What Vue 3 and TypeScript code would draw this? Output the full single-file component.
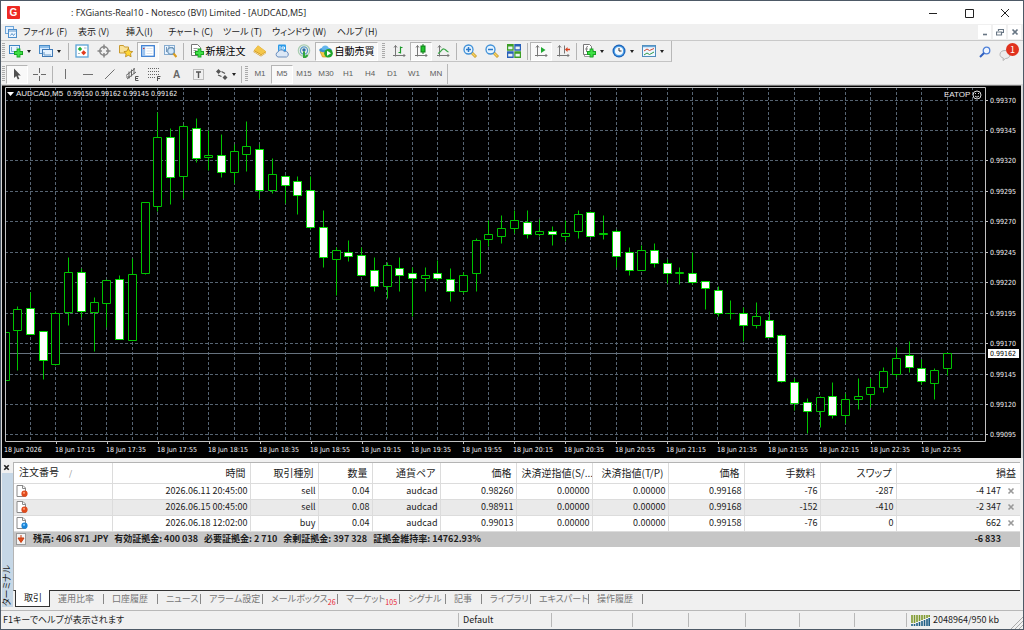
<script setup lang="ts">
type Candle = [high: number, top: number, bottom: number, low: number, falling: 0 | 1]
interface Tool { icon: string; label: string; kind?: 'drop' | 'sep' | 'grip' | 'wide'; pressed?: boolean; text?: string }

const menus = ['ファイル (F)', '表示 (V)', '挿入(I)', 'チャート (C)', 'ツール (T)', 'ウィンドウ (W)', 'ヘルプ (H)']

const sep: Tool = { icon: '', label: '', kind: 'sep' }
const grip: Tool = { icon: '', label: '', kind: 'grip' }

const mainTools: Tool[] = [
  grip,
  { icon: 'newchart', label: '新規チャート', kind: 'drop' },
  { icon: 'profiles', label: 'チャートの組表示', kind: 'drop' },
  sep,
  { icon: 'market', label: '気配値表示' },
  { icon: 'datawin', label: 'データウィンドウ' },
  { icon: 'navigator', label: 'ナビゲーター' },
  { icon: 'terminal', label: 'ターミナル', pressed: true },
  { icon: 'tester', label: 'ストラテジーテスター' },
  sep,
  { icon: 'order', label: '新規注文', kind: 'wide', text: '新規注文' },
  { icon: 'gold', label: 'メタエディター' },
  { icon: 'cloud', label: 'コミュニティ' },
  { icon: 'signal', label: 'シグナル' },
  { icon: 'auto', label: '自動売買', kind: 'wide', text: '自動売買', pressed: true },
  grip,
  { icon: 'bars', label: 'バーチャート' },
  { icon: 'candles', label: 'ローソク足', pressed: true },
  { icon: 'line', label: 'ラインチャート' },
  sep,
  { icon: 'zoomin', label: '拡大' },
  { icon: 'zoomout', label: '縮小' },
  { icon: 'tile', label: '整列' },
  sep,
  { icon: 'scroll', label: '自動スクロール', pressed: true },
  { icon: 'shift', label: 'チャートシフト' },
  sep,
  { icon: 'indicator', label: 'インディケータ', kind: 'drop' },
  { icon: 'clock', label: '時間足設定', kind: 'drop' },
  { icon: 'template', label: '定型チャート', kind: 'drop' },
]

const lineTools: Tool[] = [
  grip,
  { icon: 'cursor', label: 'カーソル', pressed: true },
  { icon: 'cross', label: 'クロスヘアカーソル' },
  sep,
  { icon: 'vline', label: '垂直線' },
  { icon: 'hline', label: '水平線' },
  { icon: 'trend', label: 'トレンドライン' },
  { icon: 'channel', label: '等距離チャネル' },
  { icon: 'fibo', label: 'フィボナッチ' },
  { icon: 'texta', label: 'テキスト' },
  { icon: 'labelt', label: 'テキストラベル' },
  { icon: 'arrows', label: '矢印', kind: 'drop' },
  sep,
  grip,
]
const frames = ['M1', 'M5', 'M15', 'M30', 'H1', 'H4', 'D1', 'W1', 'MN']

// Vertical values are in thirds of a chart unit, measured from the top of the chart.
const candles: Candle[] = [
  [717, 744, 889, 889, 0], [667, 676, 738, 860, 0], [626, 674, 752, 752, 1], [742, 743, 830, 885, 1],
  [683, 688, 840, 843, 0], [519, 565, 686, 725, 0], [553, 565, 683, 700, 1], [640, 655, 686, 802, 0],
  [585, 589, 659, 729, 0], [574, 586, 767, 767, 1], [524, 571, 769, 769, 0], [354, 355, 569, 571, 0],
  [84, 160, 368, 382, 0], [132, 160, 279, 362, 1], [121, 127, 277, 342, 0], [103, 132, 224, 236, 1],
  [140, 213, 221, 258, 0], [151, 213, 265, 279, 1], [180, 202, 265, 299, 0], [111, 187, 210, 263, 0],
  [180, 195, 318, 342, 1], [223, 271, 320, 328, 0], [273, 277, 305, 358, 1], [278, 292, 334, 390, 1],
  [278, 319, 430, 437, 1], [380, 430, 520, 551, 1], [491, 498, 525, 635, 0], [468, 505, 518, 532, 1],
  [491, 513, 573, 573, 1], [519, 560, 608, 623, 1], [535, 545, 608, 644, 0], [519, 553, 573, 621, 1],
  [549, 568, 583, 698, 1], [549, 574, 583, 623, 0], [530, 568, 583, 590, 1], [552, 586, 623, 653, 1],
  [565, 574, 621, 629, 0], [463, 469, 569, 621, 0], [410, 451, 466, 488, 0], [395, 433, 456, 478, 0],
  [380, 409, 434, 448, 0], [380, 415, 451, 463, 1], [407, 441, 451, 458, 0], [426, 441, 451, 485, 1],
  [409, 448, 456, 471, 0], [378, 392, 443, 463, 0], [383, 386, 456, 458, 1], [395, 449, 450, 466, 0],
  [436, 441, 518, 551, 1], [489, 505, 559, 575, 1], [485, 498, 559, 559, 0], [478, 498, 539, 551, 1],
  [527, 538, 569, 599, 1], [549, 566, 567, 602, 0], [505, 568, 596, 600, 1], [591, 593, 613, 676, 1],
  [606, 619, 689, 698, 1], [648, 688, 689, 707, 0], [669, 688, 724, 772, 1], [654, 696, 725, 733, 0],
  [682, 710, 759, 761, 1], [751, 753, 892, 896, 1], [882, 896, 957, 978, 1], [942, 955, 981, 1048, 1],
  [936, 940, 981, 1031, 0], [895, 937, 993, 1004, 1], [927, 946, 993, 1017, 0], [884, 937, 946, 975, 0],
  [883, 910, 932, 970, 0], [849, 862, 910, 924, 0], [791, 822, 872, 880, 0], [771, 813, 851, 864, 1],
  [827, 853, 893, 902, 1], [852, 859, 898, 946, 0], [807, 808, 854, 873, 0],
]
const snap = (v: number): number => Math.floor(v) + 0.5
const bars = candles.map(([high, top, bottom, low, falling], i) => {
  const x = snap(4 + i * 12.735)
  return {
    x,
    wick: `M${x} ${snap(high / 3)}V${snap(low / 3)}`,
    body: `M${x - 4} ${snap(top / 3)}H${x + 4}V${snap(bottom / 3)}H${x - 4}Z`,
    falling: falling === 1,
  }
})

const prices = Array.from({ length: 12 }, (_, i) => ({
  y: snap(16 + i * 30.45),
  text: (0.9937 - i * 0.00025).toFixed(5),
}))
const columns = Array.from({ length: 38 }, (_, i) => snap(29.5 + i * 25.46))
const times = Array.from({ length: 19 }, (_, i) => {
  const minutes = 16 * 60 + 55 + i * 20
  const clock = `${Math.floor(minutes / 60)}:${String(minutes % 60).padStart(2, '0')}`
  return { x: Math.round(3 + i * 50.93), text: i === 0 ? '18 Jun 2026' : `18 Jun ${clock}` }
})

const heads = ['注文番号', '時間', '取引種別', '数量', '通貨ペア', '価格', '決済逆指値(S/...', '決済指値(T/P)', '価格', '手数料', 'スワップ', '損益']
const orders = [
  { side: 'sell', cells: ['2026.06.11 20:45:00', 'sell', '0.04', 'audcad', '0.98260', '0.00000', '0.00000', '0.99168', '-76', '-287'], profit: '-4 147' },
  { side: 'sell', cells: ['2026.06.15 00:45:00', 'sell', '0.08', 'audcad', '0.98911', '0.00000', '0.00000', '0.99168', '-152', '-410'], profit: '-2 347' },
  { side: 'buy', cells: ['2026.06.18 12:02:00', 'buy', '0.04', 'audcad', '0.99013', '0.00000', '0.00000', '0.99158', '-76', '0'], profit: '662' },
]
const summary = ['残高: 406 871 JPY', '有効証拠金: 400 038', '必要証拠金: 2 710', '余剰証拠金: 397 328', '証拠金維持率: 14762.93%']

const tabs: { text: string; count?: number }[] = [
  { text: '取引' }, { text: '運用比率' }, { text: '口座履歴' }, { text: 'ニュース' }, { text: 'アラーム設定' },
  { text: 'メールボックス', count: 26 }, { text: 'マーケット', count: 105 }, { text: 'シグナル' }, { text: '記事' },
  { text: 'ライブラリ' }, { text: 'エキスパート' }, { text: '操作履歴' },
]
</script>

<template>
  <div class="window">
    <svg class="symbols" aria-hidden="true">
      <defs>
        <symbol id="newchart" viewBox="0 0 14 14">
          <rect x="0.5" y="1.5" width="10" height="8" fill="#e8f4ff" stroke="#3f86c4" />
          <path d="M2.500 3v4.500H5M8 3v1" fill="none" stroke="#7fb0d8" />
          <path d="M9.500 4.500v9M5 9h9" stroke="#17a321" stroke-width="3.800" />
          <path d="M9.500 5.500v7M6 9h7" stroke="#3fe046" stroke-width="2.200" />
        </symbol>
        <symbol id="profiles" viewBox="0 0 14 14">
          <rect x="0.5" y="1.5" width="10" height="8" fill="#d5eaff" stroke="#4a8cc8" />
          <path d="M1 3h9" stroke="#74b0e4" stroke-width="1.500" />
          <rect x="3.500" y="5.500" width="10" height="7" fill="#e6f3ff" stroke="#3f78b4" />
          <path d="M5 8v3h7" fill="none" stroke="#6d9cc8" />
        </symbol>
        <symbol id="market" viewBox="0 0 14 14">
          <rect x="1" y="1" width="12" height="12" fill="#fff" stroke="#5ba3d8" stroke-width="1.300" />
          <path d="M5 2.800 7.200 5 5 7.200 2.800 5z" fill="#20b030" />
          <path d="M8.700 6.300 11.200 8.800 8.700 11.300 6.200 8.800z" fill="#e23b1d" />
          <path d="M3 9.500h2M9 4h2.500" stroke="#a9b7c2" />
        </symbol>
        <symbol id="datawin" viewBox="0 0 14 14">
          <circle cx="7" cy="7" r="4.200" fill="none" stroke="#858585" stroke-width="1.500" />
          <path d="M7 0.500v4.500M7 9v4.500M0.500 7H5M9 7h4.500" stroke="#858585" stroke-width="1.500" />
        </symbol>
        <symbol id="navigator" viewBox="0 0 14 14">
          <path d="M0.500 1.500h4l1 1.500h4V9h-9z" fill="#f9e29a" stroke="#c99b2f" />
          <path d="m9.300 4.300 1.400 2.900 3 .4-2.200 2.100.6 3.100-2.800-1.500-2.800 1.500.6-3.100L4.900 7.600l3-.4z" fill="#ffd633" stroke="#b88614" stroke-width=".8" />
        </symbol>
        <symbol id="terminal" viewBox="0 0 14 14">
          <rect x="0.700" y="1.700" width="12.600" height="10.600" fill="#fff" stroke="#3b7ed2" stroke-width="1.300" />
          <path d="M1.300 2.300h2.900v9.400H1.300z" fill="#9cc4f0" />
          <path d="M5.500 4.500h6M5.500 7h6M5.500 9.500h6" stroke="#dbe4ee" />
          <path d="M2 4.500h1.500" stroke="#c33" />
        </symbol>
        <symbol id="tester" viewBox="0 0 14 14">
          <rect x="1.500" y="1.500" width="10" height="9" fill="#e8f3ff" stroke="#86acd0" />
          <path d="M3.500 3v5M6 2v4M9.500 3v3" stroke="#7799bb" />
          <circle cx="8" cy="7" r="3.300" fill="#cfe6fb" stroke="#6d94b5" stroke-width="1.200" />
          <path d="m10.500 9.500 3 3.500" stroke="#d99c1f" stroke-width="2.200" />
        </symbol>
        <symbol id="order" viewBox="0 0 14 14">
          <path d="M1.500 0.500h6l3 3v8h-9z" fill="#fff" stroke="#777" />
          <path d="M3.500 4.500h4M3.500 6.500h3M3.500 8.500h2" stroke="#999" />
          <path d="M9.500 4.500v9M5 9h9" stroke="#17a321" stroke-width="3.800" />
          <path d="M9.500 5.500v7M6 9h7" stroke="#3fe046" stroke-width="2.200" />
        </symbol>
        <symbol id="gold" viewBox="0 0 14 14">
          <path d="m5 1.500 8 6-.5 2-4.500 3L.5 8l.5-1.500z" fill="#c88a10" />
          <path d="m5 1.500 8 6-4.700 3L1 6.200z" fill="#f3c64b" />
          <path d="M1 7.500 8.200 11.500l4.300-2.700" stroke="#fff0b8" fill="none" stroke-width=".8" />
        </symbol>
        <symbol id="cloud" viewBox="0 0 14 14">
          <rect x="3" y="0.500" width="8" height="7.500" rx="1" fill="#2b9ae8" />
          <path d="M5 2v4M7 3h2.500v2H7z" stroke="#fff" fill="none" stroke-width=".9" />
          <path d="M3 13a2.600 2.600 0 0 1 0-5 3.500 3.500 0 0 1 6.200-.5A2.800 2.800 0 0 1 11.500 13z" fill="#dce8f6" stroke="#6d8fbd" />
        </symbol>
        <symbol id="signal" viewBox="0 0 14 14">
          <circle cx="7" cy="6.500" r="5.700" fill="none" stroke="#a8cdb0" stroke-width="1.200" />
          <circle cx="7" cy="6.500" r="3.600" fill="none" stroke="#5d9fc5" stroke-width="1.300" />
          <circle cx="7" cy="6" r="1.700" fill="#2d6ea5" />
          <path d="M7 7.500V13.500q2.500-.5 3.500-2.500" stroke="#32a63b" stroke-width="2" fill="none" />
        </symbol>
        <symbol id="auto" viewBox="0 0 14 14">
          <path d="M1 7.500h10L9 13H3.500z" fill="#f3c748" stroke="#c08a18" stroke-width=".6" />
          <ellipse cx="6.500" cy="6" rx="6.300" ry="2.300" fill="#3c8fd0" />
          <path d="M2.500 5.500C2.500 0 10 0 10 5.500q-4 1.500-7.500 0" fill="#63b5ec" />
          <circle cx="9.500" cy="9.300" r="4.300" fill="#20a52c" />
          <path d="m8 6.800 4 2.500-4 2.500z" fill="#fff" />
        </symbol>
        <symbol id="bars" viewBox="0 0 14 14">
          <path d="M3.500 1.500v11M1 11.500h12M2 3.500l1.500-2L5 3.500M11.500 10l1.500 1.500-1.500 1.500" stroke="#777" fill="none" />
          <path d="M8.500 2.500v7M8.500 3.500h2M6.500 8.500h2" stroke="#1d9a2a" stroke-width="1.200" />
        </symbol>
        <symbol id="candles" viewBox="0 0 14 14">
          <path d="M3.500 1.500v11M1 11.500h12M2 3.500l1.500-2L5 3.500M11.500 10l1.500 1.500-1.500 1.500" stroke="#777" fill="none" />
          <path d="M9 0v10" stroke="#0b7d14" />
          <rect x="7" y="2" width="4" height="6" fill="#1fc42b" stroke="#0b7d14" />
        </symbol>
        <symbol id="line" viewBox="0 0 14 14">
          <path d="M3.500 1.500v11M1 11.500h12M2 3.500l1.500-2L5 3.500M11.500 10l1.500 1.500-1.500 1.500" stroke="#777" fill="none" />
          <path d="M2 9.500c3-1 3.500-5 6-4.500 2 .4 2.500 2.500 4.500 3" stroke="#3ba848" fill="none" stroke-width="1.200" />
        </symbol>
        <symbol id="zoomin" viewBox="0 0 14 14">
          <path d="m8.500 8.500 4.500 4.500" stroke="#c89420" stroke-width="2.800" />
          <path d="m9 9 3.500 3.500" stroke="#f6d565" stroke-width="1.400" />
          <circle cx="5.500" cy="5.500" r="4.500" fill="#e6f4ff" stroke="#3f90d8" stroke-width="1.300" />
          <path d="M5.500 3v5M3 5.500h5" stroke="#2b78c8" stroke-width="1.500" />
        </symbol>
        <symbol id="zoomout" viewBox="0 0 14 14">
          <path d="m8.500 8.500 4.500 4.500" stroke="#c89420" stroke-width="2.800" />
          <path d="m9 9 3.500 3.500" stroke="#f6d565" stroke-width="1.400" />
          <circle cx="5.500" cy="5.500" r="4.500" fill="#e6f4ff" stroke="#3f90d8" stroke-width="1.300" />
          <path d="M3 5.500h5" stroke="#2b78c8" stroke-width="1.500" />
        </symbol>
        <symbol id="tile" viewBox="0 0 14 14">
          <path d="M0 0h6.700v6.700H0zM7.300 7.300H14V14H7.300z" fill="#3c9e26" />
          <path d="M7.300 0H14v6.700H7.300zM0 7.300h6.700V14H0z" fill="#2860b8" />
          <path d="M1.200 2.500h4.300v2.800H1.200zM8.500 2.500h4.300v2.800H8.500zM1.200 9.800h4.300v2.800H1.200zM8.500 9.800h4.300v2.800H8.500z" fill="#e9f2f4" />
        </symbol>
        <symbol id="scroll" viewBox="0 0 14 14">
          <path d="M3.500 1.500v11M1 11.500h12M2 3.500l1.500-2L5 3.500M11.500 10l1.500 1.500-1.500 1.500" stroke="#777" fill="none" />
          <path d="m7 3 4.500 3L7 9z" fill="#20a832" />
        </symbol>
        <symbol id="shift" viewBox="0 0 14 14">
          <path d="M3.500 1.500v11M1 11.500h12M2 3.500l1.500-2L5 3.500M11.500 10l1.500 1.500-1.500 1.500" stroke="#777" fill="none" />
          <path d="M8.500 1.500v8" stroke="#777" />
          <path d="M9 5.500 11.500 3v1.700H14v1.600h-2.500V8z" fill="#d8401e" />
        </symbol>
        <symbol id="indicator" viewBox="0 0 14 14">
          <path d="M2.500 3.500h6l3 3v6h-9z" fill="#fff" stroke="#999" />
          <path d="M1.500 0.500h6l2 2v8h-8z" fill="#fff" stroke="#777" />
          <path d="M6 2.500Q4.500 2 4.500 4v4M3 5h3" stroke="#888" fill="none" />
          <path d="M9.500 4.500v9M5 9h9" stroke="#17a321" stroke-width="3.800" />
          <path d="M9.500 5.500v7M6 9h7" stroke="#3fe046" stroke-width="2.200" />
        </symbol>
        <symbol id="clock" viewBox="0 0 14 14">
          <circle cx="7" cy="7" r="6.500" fill="#1c62b8" />
          <circle cx="7" cy="7" r="5.300" fill="#4fa3ea" />
          <circle cx="7" cy="7" r="4.100" fill="#f3f9ff" />
          <path d="M7 4v3h2.500" stroke="#333" fill="none" />
        </symbol>
        <symbol id="template" viewBox="0 0 14 14">
          <rect x="0.500" y="1.500" width="13" height="11" fill="#eef7ff" stroke="#4f8cbc" />
          <path d="M1 2.500h12" stroke="#69a6d6" stroke-width="1.400" />
          <path d="m2 7 3-2 2.500 1.500L12 4.500" stroke="#cc4a33" fill="none" />
          <path d="m2 11 3-2 2.500 1.500L12 8" stroke="#2f9948" fill="none" />
        </symbol>
        <symbol id="cursor" viewBox="0 0 14 14">
          <path d="M4 1.500v9.500l2.200-2 1.600 3.500 1.600-.7-1.600-3.400h3z" fill="#505050" />
        </symbol>
        <symbol id="cross" viewBox="0 0 14 14">
          <path d="M7.500 1v5M7.500 9v5M1 7.500h5M9 7.500h5" stroke="#6a6a6a" />
        </symbol>
        <symbol id="vline" viewBox="0 0 14 14"><path d="M6.500 2v10" stroke="#707070" /></symbol>
        <symbol id="hline" viewBox="0 0 14 14"><path d="M2 7.500h10" stroke="#707070" /></symbol>
        <symbol id="trend" viewBox="0 0 14 14"><path d="m2 12 9.500-9.500" stroke="#707070" /></symbol>
        <symbol id="channel" viewBox="0 0 14 14">
          <path d="m1 8.500 9-7M2 12l9-7M4 4.500v7M6.500 2.500v7M9 1v6M1 10h4" stroke="#666" />
          <path d="M13.500 9.500h-3v4h3M10.500 11.500h2.500" stroke="#555" fill="none" />
        </symbol>
        <symbol id="fibo" viewBox="0 0 14 14">
          <path d="M1 1.500h12M1 4.500h12M1 7.500h12M1 10.500h7" stroke="#666" stroke-dasharray="1 1" />
          <path d="M13.500 9.500h-3V14M10.500 11.500h2.500" stroke="#555" fill="none" />
        </symbol>
        <symbol id="texta" viewBox="0 0 14 14">
          <text x="4" y="11" class="glyph">A</text>
        </symbol>
        <symbol id="labelt" viewBox="0 0 14 14">
          <rect x="2.500" y="2.500" width="10" height="10" fill="none" stroke="#888" stroke-dasharray="1 1" />
          <path d="M5 5h5M7.500 5v6" stroke="#555" stroke-width="1.400" />
        </symbol>
        <symbol id="arrows" viewBox="0 0 14 14">
          <path d="m3.500 2 2.500 2.500L3.500 7 1 4.500zM10 8l2.500 2.500L10 13l-2.500-2.500z" fill="#555" />
          <path d="M6.500 4.500 10 6.500M3 8l3.500 1.500" stroke="#555" stroke-width="1.200" />
        </symbol>
        <symbol id="page-sell" viewBox="0 0 12 12">
          <path d="M1 0.500h6L9.500 3v8.500H1z" fill="#fff" stroke="#8a8a8a" />
          <path d="M6.500 0.500v3h3" fill="none" stroke="#8a8a8a" />
          <circle cx="8.500" cy="8.700" r="3.100" fill="#e04a1c" />
          <circle cx="8" cy="7.800" r="1.100" fill="#ff9a70" />
        </symbol>
        <symbol id="page-buy" viewBox="0 0 12 12">
          <path d="M1 0.500h6L9.500 3v8.500H1z" fill="#fff" stroke="#8a8a8a" />
          <path d="M6.500 0.500v3h3" fill="none" stroke="#8a8a8a" />
          <circle cx="8.500" cy="8.700" r="3.100" fill="#1b86d8" />
          <circle cx="8" cy="7.800" r="1.100" fill="#86cbff" />
        </symbol>
      </defs>
    </svg>

    <header class="titlebar">
      <span class="logo">G</span>
      <h1>: FXGiants-Real10 - Notesco (BVI) Limited - [AUDCAD,M5]</h1>
      <div class="window-buttons">
        <button type="button" aria-label="最小化"><svg viewBox="0 0 10 10"><path d="M1 5.500h8" /></svg></button>
        <button type="button" aria-label="最大化"><svg viewBox="0 0 10 10"><path d="M1.500 1.500h8v8h-8z" /></svg></button>
        <button type="button" aria-label="閉じる"><svg viewBox="0 0 10 10"><path d="m1 1 8 8M9 1 1 9" /></svg></button>
      </div>
    </header>

    <nav class="menubar">
      <svg class="doc-icon" viewBox="0 0 12 12" aria-hidden="true">
        <rect x="0.500" y="0.500" width="8" height="7" fill="#e4f1ff" stroke="#6fa5d8" />
        <rect x="3.500" y="3.500" width="8" height="8" fill="#eef6ff" stroke="#4f8fcb" />
        <path d="M4 5h7M5.500 9.500l1.500-2 1.500 2 1.500-2" stroke="#5a95cc" fill="none" />
      </svg>
      <div class="menus"><button v-for="m in menus" :key="m" type="button">{{ m }}</button></div>
      <div class="child-buttons">
        <button type="button" aria-label="チャートを最小化"><svg viewBox="0 0 8 8"><path d="M2 6.500h4" stroke-width="1.600" /></svg></button>
        <button type="button" aria-label="チャートを元に戻す"><svg viewBox="0 0 8 8"><path d="M2.500 3V1.500h5v3H6M0.500 4h5v3h-5zM0.500 4h5" stroke-width="1.200" /></svg></button>
        <button type="button" aria-label="チャートを閉じる"><svg viewBox="0 0 8 8"><path d="m1.500 1.500 5 5M6.500 1.500l-5 5" stroke-width="1.700" /></svg></button>
      </div>
    </nav>

    <div class="toolbar">
      <div class="tools framed">
        <template v-for="(t, i) in mainTools" :key="i">
          <span v-if="t.kind === 'sep'" class="sep"></span>
          <span v-else-if="t.kind === 'grip'" class="grip"></span>
          <button v-else type="button" :aria-label="t.label" class="tool" :class="[t.kind, { pressed: t.pressed }]">
            <svg class="icon" aria-hidden="true"><use :href="'#' + t.icon" /></svg>
            <span v-if="t.text">{{ t.text }}</span>
            <span v-if="t.kind === 'drop'" class="caret"></span>
          </button>
        </template>
      </div>
      <div class="extras">
        <button type="button" aria-label="検索">
          <svg viewBox="0 0 12 12" class="search"><circle cx="7.500" cy="4.500" r="3.300" fill="#eef5ff" stroke="#4f80d8" stroke-width="1.300" /><path d="M5 7 1 11" stroke="#2f5fc0" stroke-width="2" /></svg>
        </button>
        <button type="button" class="chat" aria-label="通知 1件">
          <svg viewBox="0 0 14 12" class="bubble"><path d="M6 1.500c3 0 5 1.500 5 4S9 9.500 6.500 9.500L4 11.500l.3-2.500C2 8.500 1 7 1 5.500c0-2.500 2-4 5-4" fill="#ececec" stroke="#b5b5b5" /></svg>
          <span class="badge">1</span>
        </button>
      </div>
    </div>

    <div class="toolbar second">
      <div class="tools">
        <template v-for="(t, i) in lineTools" :key="i">
          <span v-if="t.kind === 'sep'" class="sep"></span>
          <span v-else-if="t.kind === 'grip'" class="grip"></span>
          <button v-else type="button" :aria-label="t.label" class="tool" :class="[t.kind, { pressed: t.pressed }]">
            <svg class="icon" aria-hidden="true"><use :href="'#' + t.icon" /></svg>
            <span v-if="t.kind === 'drop'" class="caret"></span>
          </button>
        </template>
        <button v-for="f in frames" :key="f" type="button" class="tool frame" :class="{ pressed: f === 'M5' }">{{ f }}</button>
      </div>
    </div>

    <main class="chart">
      <svg viewBox="0 0 1022 374" preserveAspectRatio="xMinYMin meet" role="img" aria-label="AUDCAD,M5">
        <rect x="0" y="0" width="1022" height="374" class="edge" />
        <rect x="1" y="1" width="1019" height="373" class="ink" />
        <path d="M1 1.500H1020" class="bevel" />
        <g class="grid">
          <path v-for="x in columns" :key="'c' + x" :d="`M${x} 3V357`" />
          <path v-for="p in prices" :key="'p' + p.y" :d="`M4 ${p.y}H984`" />
        </g>
        <path d="M4 269.500H984" class="quote" />
        <svg x="4" y="3" width="980" height="354" viewBox="4 3 980 354">
          <g v-for="b in bars" :key="b.x" class="candle" :class="{ falling: b.falling }">
            <path :d="b.wick" />
            <path :d="b.body" class="body" />
          </g>
        </svg>
        <path d="M4.500 3.500H984.500V357.500H4.500Z" class="frame-line" />
        <path v-for="t in times.slice(1)" :key="'t' + t.x" :d="`M${t.x + 1.5} 357v3`" class="frame-line" />
        <path v-for="p in prices" :key="'k' + p.y" :d="`M985 ${p.y}h2`" class="frame-line" />
        <path d="M6 8h7l-3.500 4z" class="white" />
        <text x="15" y="12" class="symbol">AUDCAD,M5</text>
        <text x="66" y="12" class="num">0.99150 0.99162 0.99145 0.99162</text>
        <text x="943" y="13" class="symbol">EATOP</text>
        <g class="face">
          <circle cx="976" cy="11" r="4" />
          <path d="M974 12q2 2.500 4 0M974.500 9v1M977.500 9v1" />
        </g>
        <text v-for="p in prices" :key="'l' + p.y" x="989" :y="p.y + 2.5" class="num">{{ p.text }}</text>
        <rect x="987" y="265" width="31" height="9" class="white" />
        <text x="989" y="272" class="num now">0.99162</text>
        <text v-for="t in times" :key="'n' + t.x" :x="t.x" y="368" class="num">{{ t.text }}</text>
      </svg>
    </main>

    <section class="terminal">
      <aside class="side">
        <button type="button" aria-label="ターミナルを閉じる"><svg viewBox="0 0 8 8"><path d="m2 2 4 4M6 2 2 6" /></svg></button>
        <div class="strip"><span>ターミナル</span></div>
      </aside>
      <div class="panel">
        <div class="sheet">
          <table>
            <colgroup><col v-for="(h, i) in heads" :key="i" :class="'c' + i" /></colgroup>
            <thead>
              <tr>
                <th v-for="(h, i) in heads" :key="i" scope="col">{{ h }}<span v-if="i === 0" class="sort">/</span></th>
              </tr>
            </thead>
            <tbody>
              <tr v-for="o in orders" :key="o.cells[0]">
                <td class="mark"><svg aria-hidden="true"><use :href="'#page-' + o.side" /></svg></td>
                <td v-for="(c, i) in o.cells" :key="i">{{ c }}</td>
                <td class="profit">
                  <div>{{ o.profit }}<button type="button" aria-label="決済"><svg viewBox="0 0 8 8"><path d="m1.500 1.500 5 5M6.500 1.500l-5 5" /></svg></button></div>
                </td>
              </tr>
            </tbody>
            <tfoot>
              <tr>
                <td colspan="11">
                  <div class="totals">
                    <svg viewBox="0 0 12 12" aria-hidden="true">
                      <rect x="1.500" y="0.500" width="9" height="11" fill="#f4f4f4" stroke="#999" />
                      <path d="M6 2v3M3 5h6L6 9.500z" fill="#e24c1b" stroke="#c73d10" />
                    </svg>
                    <span v-for="s in summary" :key="s">{{ s }}</span>
                  </div>
                </td>
                <td>-6 833</td>
              </tr>
            </tfoot>
          </table>
        </div>
        <div class="tabs" role="tablist">
          <button v-for="(t, i) in tabs" :key="t.text" type="button" role="tab" :aria-selected="i === 0" :class="{ active: i === 0 }">
            {{ t.text }}<sub v-if="t.count">{{ t.count }}</sub>
          </button>
        </div>
      </div>
    </section>

    <footer class="status">
      <span class="hint">F1キーでヘルプが表示されます</span>
      <span>Default</span><span></span><span></span><span></span><span></span><span></span><span></span>
      <span class="traffic">
        <svg viewBox="0 0 19 11" aria-hidden="true">
          <path d="M1 0v8M3.500 0v8M6 0v7M8.500 0v6M11 0v5M13.500 0v4M16 0v3M18.200 0v2" stroke="#7f9a2c" stroke-width="1.600" />
          <path d="M1 9v2M3.500 9v2M6 8v3M8.500 7v4M11 6v5M13.500 5v6M16 4v7M18.200 3v8" stroke="#1f5f86" stroke-width="1.600" />
        </svg>
        2048964/950 kb
      </span>
      <svg class="resize" viewBox="0 0 12 12" aria-hidden="true"><path d="M0 12 12 0M4 12l8-8M8 12l4-4" /></svg>
    </footer>
  </div>
</template>

<style>
body {
  background: #f0f0f0;
}
</style>

<style scoped>
* {
  box-sizing: border-box;
}
.window {
  display: flex;
  flex-direction: column;
  min-height: 100vh;
  border: 1px solid #4d5966;
  background: #f0f0f0;
  color: #1c1c1c;
  font-family: "Noto Sans CJK JP", "Noto Sans", sans-serif;
  font-size: 10px;
  font-feature-settings: "palt";
  line-height: 14px;
}
.symbols {
  position: absolute;
  width: 0;
  height: 0;
}
button {
  padding: 0;
  border: 0;
  background: none;
  color: inherit;
  font: inherit;
  font-feature-settings: inherit;
  white-space: nowrap;
}
.glyph {
  font: bold 10px "Liberation Sans", sans-serif;
  fill: #666;
}

.titlebar {
  display: flex;
  align-items: center;
  height: 23px;
  padding-left: 6px;
  background: #fff;
}
.logo {
  width: 13px;
  height: 13px;
  border-radius: 1px;
  background: #ee2a24;
  color: #fff;
  font: bold 10px/13px "Liberation Sans", sans-serif;
  text-align: center;
}
h1 {
  flex: 1;
  margin: 0 0 0 51px;
  font-family: "Open Sans", sans-serif;
  font-size: 9px;
  font-weight: 400;
}
.window-buttons {
  display: flex;
}
.window-buttons button {
  display: grid;
  place-items: center;
  width: 36px;
  height: 22px;
}
.window-buttons svg {
  width: 10px;
  height: 10px;
  fill: none;
  stroke: #222;
}

.menubar {
  display: flex;
  align-items: center;
  height: 17px;
  padding-left: 4px;
  border-bottom: 1px solid #c9c9c9;
}
.doc-icon {
  width: 12px;
  height: 12px;
}
.menus {
  display: grid;
  flex: 1;
  grid-template-columns: 55px 48px 42px 55px 49px 65px 60px;
  padding-left: 6px;
  font-size: 9px;
}
.menus button {
  text-align: left;
}
.child-buttons {
  display: flex;
  gap: 2px;
  padding-right: 2px;
}
.child-buttons button {
  display: grid;
  place-items: center;
  width: 13px;
  height: 14px;
  background: #fff;
}
.child-buttons svg {
  width: 8px;
  height: 8px;
  fill: none;
  stroke: #687684;
}

.toolbar {
  display: flex;
  justify-content: space-between;
  height: 21px;
}
.tools {
  display: flex;
  align-items: center;
  border-right: 1px solid #b8b8b8;
}
.framed {
  padding-right: 2px;
  border-bottom: 1px solid #c4c4c4;
}
.grip {
  width: 5px;
  height: 16px;
  background: repeating-linear-gradient(#aaa 0 1px, #f0f0f0 1px 2px) 1px 0 / 3px 100% no-repeat;
}
.framed .tool + .grip {
  margin: 0 2px 0 3px;
}
.sep {
  width: 5px;
  height: 17px;
  background: linear-gradient(#b4b4b4, #b4b4b4) 2px 0 / 1px 100% no-repeat;
}
.tool {
  display: flex;
  align-items: center;
  justify-content: center;
  width: 22px;
  height: 19px;
}
.icon {
  flex: none;
  width: 14px;
  height: 14px;
}
.drop {
  width: 30px;
  justify-content: flex-start;
  padding-left: 3px;
}
.second .drop {
  padding-left: 6px;
}
.second .caret {
  margin-left: 3px;
}
.caret {
  margin-left: 4px;
  border: 2px solid transparent;
  border-top: 3px solid #222;
  border-bottom: 0;
}
.wide {
  width: 63px;
  gap: 2px;
  color: #000;
}
.pressed {
  border: 1px solid #b5b5b5;
  border-right-color: #fff;
  border-bottom-color: #fff;
  background: #f9f9f9;
}
.frame {
  color: #5c5c5c;
  font: 8px/14px "Liberation Sans", sans-serif;
}
.extras {
  display: flex;
  align-items: center;
  gap: 8px;
  padding-right: 4px;
}
.search {
  display: block;
  width: 12px;
  height: 12px;
}
.chat {
  position: relative;
  width: 20px;
  height: 18px;
}
.bubble {
  position: absolute;
  left: 0;
  bottom: 0;
  width: 14px;
  height: 12px;
}
.badge {
  position: absolute;
  top: 0;
  right: 0;
  width: 13px;
  height: 13px;
  border-radius: 50%;
  background: #e0311d;
  color: #fff;
  font-size: 9px;
  line-height: 13px;
}
.second {
  height: 22px;
  padding-top: 2px;
}

.chart {
  display: flex;
  flex: 1;
  background: #000;
}
.chart > svg {
  flex: 1;
  width: 100%;
}
.edge {
  fill: #d8d8d8;
}
.ink {
  fill: #000;
}
.bevel {
  stroke: #777;
}
.grid path {
  fill: none;
  stroke: #566472;
  stroke-dasharray: 3 2;
}
.quote {
  stroke: #66727e;
}
.candle path {
  fill: #000;
  stroke: #00c400;
}
.candle.falling .body {
  fill: #fff;
  stroke: #00e000;
}
.frame-line {
  fill: none;
  stroke: #c2c2c2;
}
.white {
  fill: #fff;
}
.symbol {
  fill: #ececec;
  font: 8px "Liberation Sans", sans-serif;
}
.num {
  fill: #f2f2f2;
  font: 7px "DejaVu Sans Condensed", "DejaVu Sans", sans-serif;
}
.num.now {
  fill: #000;
}
.face {
  fill: none;
  stroke: #ddd;
}

.terminal {
  display: flex;
  height: 152px;
  padding: 4px 3px 3px 1px;
}
.side {
  display: flex;
  flex-direction: column;
  width: 11px;
}
.side button {
  height: 11px;
}
.side button svg {
  display: block;
  width: 9px;
  height: 9px;
  fill: none;
  stroke: #222;
  stroke-width: 1.5;
}
.strip {
  display: flex;
  flex: 1;
  align-items: flex-end;
  background: #c6d7e6;
  padding-bottom: 1px;
}
.strip span {
  font-size: 9px;
  line-height: 10px;
  text-orientation: sideways;
  transform: rotate(180deg);
  writing-mode: vertical-rl;
}
.panel {
  display: flex;
  flex: 1;
  flex-direction: column;
  min-width: 0;
}
.sheet {
  height: 129px;
  border-top: 1px solid #b4b4b4;
  border-bottom: 1px solid #333;
  border-left: 1px solid #b4b4b4;
  background: #fff;
}
table {
  width: 100%;
  border-collapse: collapse;
  table-layout: fixed;
}
.c0 { width: 98px; }
.c1 { width: 138px; }
.c2 { width: 68px; }
.c3 { width: 54px; }
.c4 { width: 68px; }
.c5, .c6, .c7, .c8, .c9, .c10 { width: 76px; }
th,
td {
  overflow: hidden;
  padding: 0 2px 0 0;
  border-right: 1px solid #dcdcdc;
  font-weight: 400;
  text-align: right;
  white-space: nowrap;
}
th {
  height: 20px;
  padding: 0 4px 0 5px;
  border-bottom: 1px solid #dcdcdc;
}
th:first-child {
  text-align: left;
}
.sort {
  margin-left: 10px;
  color: #888;
  font-size: 8px;
}
tbody td {
  height: 16px;
  font-size: 9px;
}
tbody tr:nth-child(2) {
  background: #eaeaea;
}
tbody tr {
  border-bottom: 1px solid #dcdcdc;
}
.mark svg {
  display: block;
  width: 12px;
  height: 12px;
  margin-left: 2px;
}
td:last-child,
th:last-child {
  border-right: 0;
}
.profit div {
  display: flex;
  align-items: center;
  justify-content: flex-end;
  gap: 6px;
  padding-right: 3px;
}
.profit svg {
  display: block;
  width: 8px;
  height: 8px;
  stroke: #999;
  stroke-width: 1.6;
}
tfoot td {
  height: 16px;
  padding-right: 19px;
  border: 0;
  background: #c6c6c6;
  font-size: 9px;
  font-weight: 700;
}
.totals {
  display: flex;
  align-items: center;
  gap: 6px;
}
.totals svg {
  width: 12px;
  height: 12px;
  margin-left: 1px;
}

.tabs {
  display: grid;
  grid-template-columns: 37px 54px 54px 43px 62px 75px 62px 46px 36px 49px 58px 54px;
  height: 16px;
  font-size: 9px;
}
.tabs button {
  position: relative;
  padding-left: 8px;
  color: #777;
  text-align: left;
}
.tabs button:not(.active)::after {
  position: absolute;
  top: 3px;
  right: 0;
  width: 1px;
  height: 10px;
  background: #888;
  content: "";
}
.tabs .active {
  margin-top: -1px;
  margin-left: 2px;
  border: 1px solid #333;
  border-top: 0;
  background: #fff;
  color: #111;
}
sub {
  color: #e8202e;
  font-size: 7px;
  line-height: 0;
}

.status {
  display: grid;
  grid-template-columns: 1fr 93px 81px 56px 57px 54px 55px 52px 105px 12px;
  align-items: center;
  height: 19px;
  border-top: 1px solid #b8b8b8;
}
.status span {
  height: 14px;
  padding-left: 4px;
  border-left: 1px solid #b8b8b8;
  font-size: 9px;
}
.status .hint {
  padding-left: 2px;
  border-left: 0;
}
.traffic {
  display: flex;
  align-items: center;
  gap: 3px;
}
.traffic svg {
  width: 19px;
  height: 11px;
}
.resize {
  align-self: end;
  width: 12px;
  height: 12px;
  stroke: #aaa;
}
</style>
